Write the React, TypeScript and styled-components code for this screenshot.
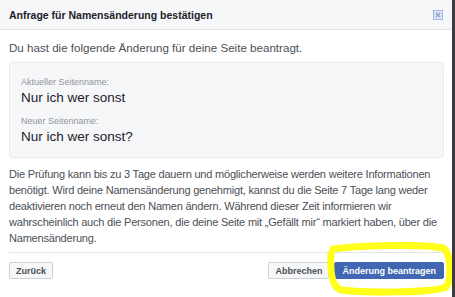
import { createGlobalStyle, styled } from 'styled-components';

const Global = createGlobalStyle`
  html, body {
    margin: 0;
    padding: 0;
    background: #3a3c40;
  }
  body {
    font-family: "Liberation Sans", Arial, sans-serif;
  }
`;

export default function App() {
  return (
    <>
      <Global />
      <S.Page>
        <S.Dialog>
          <S.Header>
            <S.Title>Anfrage für Namensänderung bestätigen</S.Title>
            <S.Close aria-label="Schließen">
              <svg width="10" height="10" viewBox="0 0 10 10">
                <rect x="0.5" y="0.5" width="9" height="9" fill="#dfe6f5" stroke="#a4b6de" />
                <path d="M2.8 2.8 L7.2 7.2 M7.2 2.8 L2.8 7.2" stroke="#8ea3d4" strokeWidth="1.3" />
              </svg>
            </S.Close>
          </S.Header>
          <S.Body>
            <S.Text>Du hast die folgende Änderung für deine Seite beantragt.</S.Text>
            <S.NameBox>
              <S.Label>Aktueller Seitenname:</S.Label>
              <S.Name>Nur ich wer sonst</S.Name>
              <S.Label $gap>Neuer Seitenname:</S.Label>
              <S.Name>Nur ich wer sonst?</S.Name>
            </S.NameBox>
            <S.Paragraph>
              Die Prüfung kann bis zu 3 Tage dauern und möglicherweise werden weitere Informationen
              <br />
              benötigt. Wird deine Namensänderung genehmigt, kannst du die Seite 7 Tage lang weder
              <br />
              deaktivieren noch erneut den Namen ändern. Während dieser Zeit informieren wir
              <br />
              wahrscheinlich auch die Personen, die deine Seite mit „Gefällt mir“ markiert haben, über die
              <br />
              Namensänderung.
            </S.Paragraph>
          </S.Body>
          <S.Footer>
            <S.Button>Zurück</S.Button>
            <S.Spacer />
            <S.Button>Abbrechen</S.Button>
            <S.Button $primary>Änderung beantragen</S.Button>
          </S.Footer>
          <S.Marker width="131" height="55" viewBox="0 0 131 55">
            <path
              d="M9 7 C40 3 100 2 119 6 C127 10 128 38 122 45 C110 51 40 51 18 48 C8 46 6 30 7 12"
              fill="none"
              stroke="#ffff1a"
              strokeWidth="7"
              strokeLinecap="round"
            />
          </S.Marker>
        </S.Dialog>
      </S.Page>
    </>
  );
}

const S = {
  Page: styled.div`
    width: 455px;
    height: 297px;
    display: flex;
  `,
  Dialog: styled.div`
    position: relative;
    width: 452px;
    height: 297px;
    background: #fff;
    display: flex;
    flex-direction: column;
    overflow: hidden;
  `,
  Header: styled.div`
    height: 30px;
    box-sizing: border-box;
    background: #f6f7f9;
    border-bottom: 1px solid #e5e5e5;
    display: flex;
    align-items: center;
    padding: 0 9px 0 9px;
  `,
  Title: styled.h1`
    flex: 1;
    margin: 0;
    font-size: 10.5px;
    font-weight: bold;
    color: #1d2129;
  `,
  Close: styled.span`
    display: flex;
    width: 10px;
    height: 10px;
  `,
  Body: styled.div`
    padding: 11px 8px 0 9px;
    display: flex;
    flex-direction: column;
  `,
  Text: styled.p`
    margin: 0;
    font-size: 11.6px;
    line-height: 14px;
    color: #4b4f56;
  `,
  NameBox: styled.div`
    margin-top: 7px;
    background: #f6f7f9;
    border: 1px solid #e9ebee;
    border-radius: 3px;
    padding: 13px 11px 10px 11px;
    display: flex;
    flex-direction: column;
  `,
  Label: styled.span<{ $gap?: boolean }>`
    margin-top: ${(p) => (p.$gap ? '7px' : '0')};
    font-size: 9px;
    line-height: 12px;
    color: #90949c;
  `,
  Name: styled.span`
    font-size: 13.5px;
    line-height: 20px;
    color: #1d2129;
  `,
  Paragraph: styled.p`
    margin: 8px 0 0 0;
    font-size: 11px;
    letter-spacing: -0.2px;
    line-height: 16px;
    color: #4b4f56;
    white-space: nowrap;
  `,
  Footer: styled.div`
    margin: 6px 8px 0 9px;
    padding-top: 9px;
    border-top: 1px solid #e5e5e5;
    display: flex;
    gap: 5px;
  `,
  Spacer: styled.div`
    flex: 1;
  `,
  Button: styled.button<{ $primary?: boolean }>`
    height: 17px;
    padding: 0 ${(p) => (p.$primary ? '7px' : '6px')};
    font-family: "Liberation Sans", Arial, sans-serif;
    font-size: 9px;
    font-weight: bold;
    border-radius: 2px;
    border: 1px solid ${(p) => (p.$primary ? '#4267b2' : '#ced0d4')};
    background: ${(p) => (p.$primary ? '#4267b2' : '#f6f7f9')};
    color: ${(p) => (p.$primary ? '#fff' : '#4b4f56')};
  `,
  Marker: styled.svg`
    position: absolute;
    left: 324px;
    top: 242px;
  `,
};
